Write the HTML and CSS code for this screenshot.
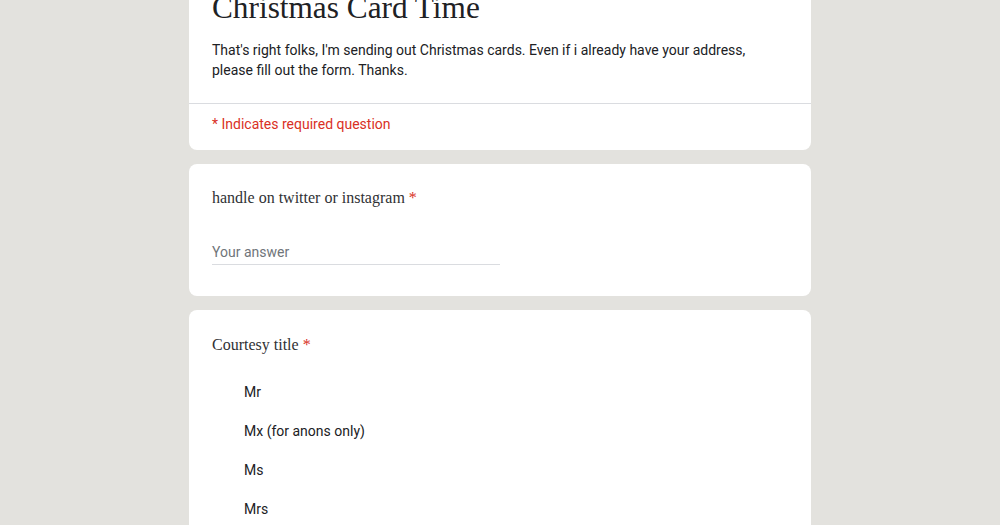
FILE: index.html
```html
<!DOCTYPE html>
<html>
<head>
<meta charset="utf-8">
<link rel="stylesheet" href="styles.css">
</head>
<body>
<div class="page">
  <div class="card header">
    <div class="header-main">
      <div class="title">Christmas Card Time</div>
      <div class="desc">That's right folks, I'm sending out Christmas cards. Even if i already have your address, please fill out the form. Thanks.</div>
    </div>
    <div class="required-note">* Indicates required question</div>
  </div>
  <div class="card question">
    <div class="q-title">handle on twitter or instagram <span class="star">*</span></div>
    <div class="answer">Your answer</div>
  </div>
  <div class="card question choice">
    <div class="q-title">Courtesy title <span class="star">*</span></div>
    <div class="options">
      <div class="option">Mr</div>
      <div class="option">Mx (for anons only)</div>
      <div class="option">Ms</div>
      <div class="option">Mrs</div>
    </div>
  </div>
</div>
</body>
</html>
```
FILE: styles.css
```css
html, body {
  margin: 0;
  padding: 0;
  background: #e3e2de;
  overflow: hidden;
}
.page {
  width: 622px;
  margin: -36px auto 0;
  display: flex;
  flex-direction: column;
  gap: 14px;
}
.card {
  background: #fff;
  border-radius: 8px;
}
.header-main {
  padding: 24px 23px 23px;
  border-bottom: 1px solid #dadce0;
}
.title {
  font-family: "Liberation Serif", serif;
  font-size: 31.3px;
  line-height: 40px;
  color: #202124;
}
.desc {
  margin-top: 12px;
  font-family: Roboto, sans-serif;
  font-size: 14px;
  line-height: 20px;
  color: #202124;
}
.required-note {
  padding: 10px 23px 16px;
  font-family: Roboto, sans-serif;
  font-size: 14px;
  line-height: 20px;
  color: #d93025;
}
.question {
  padding: 24px 23px 31px;
}
.choice {
  padding-top: 25px;
}
.q-title {
  font-family: "Liberation Serif", serif;
  font-size: 16px;
  line-height: 20px;
  color: #303134;
}
.star {
  color: #d93025;
}
.answer {
  margin-top: 32px;
  width: 288px;
  height: 24px;
  line-height: 24px;
  border-bottom: 1px solid #dadce0;
  font-family: Roboto, sans-serif;
  font-size: 14px;
  color: #70757a;
}
.options {
  margin-top: 17px;
  padding-left: 32px;
  display: flex;
  flex-direction: column;
}
.option {
  padding: 10px 0 9px;
  font-family: Roboto, sans-serif;
  font-size: 14px;
  line-height: 20px;
  color: #202124;
}
```
